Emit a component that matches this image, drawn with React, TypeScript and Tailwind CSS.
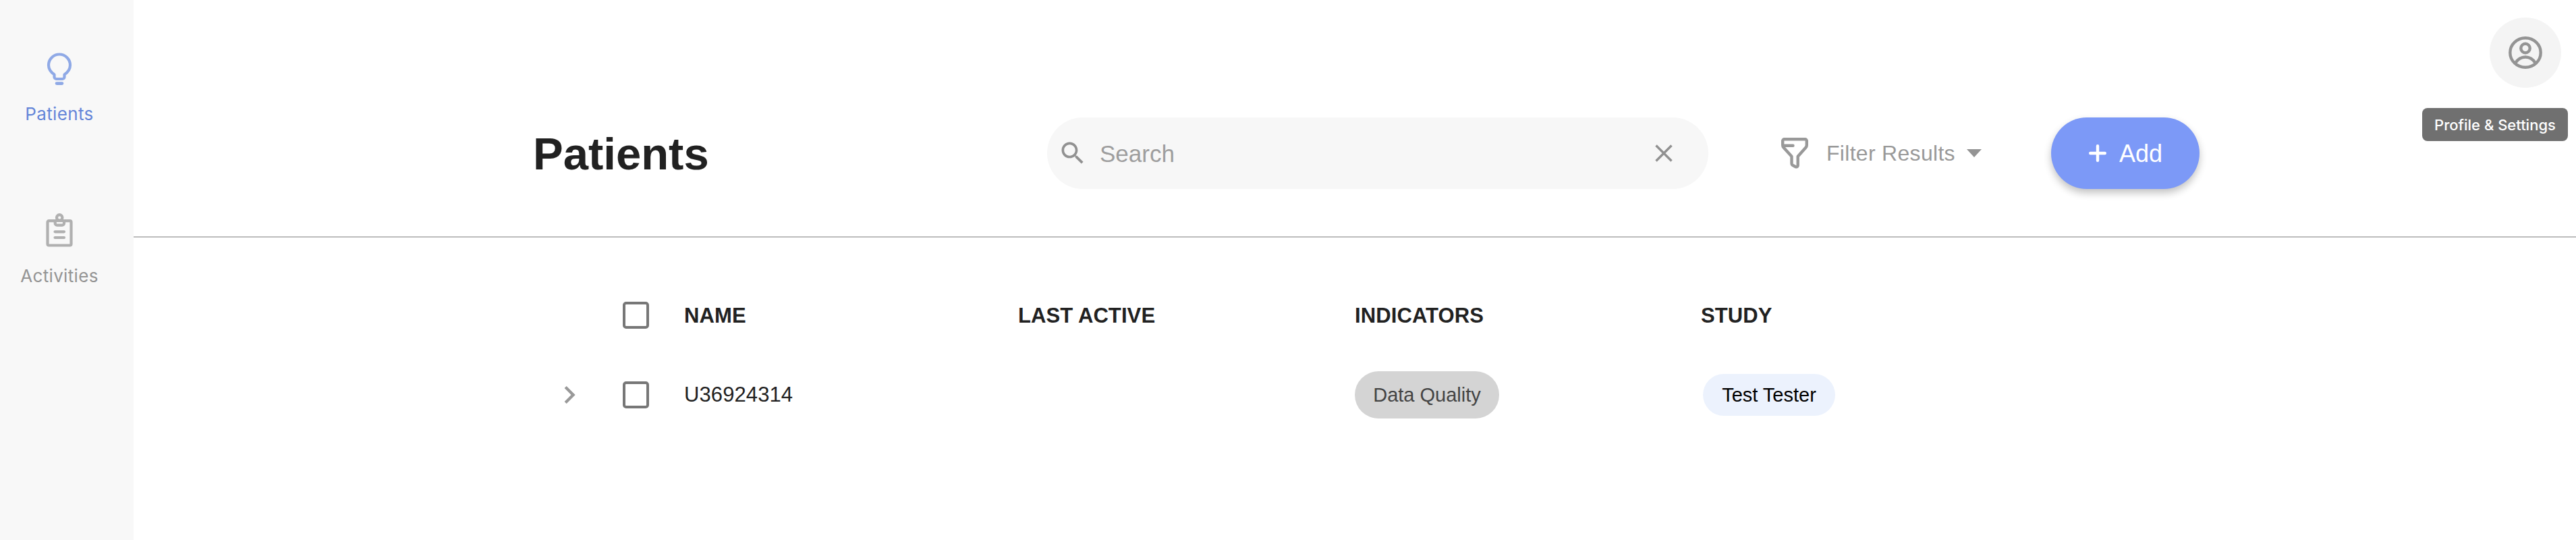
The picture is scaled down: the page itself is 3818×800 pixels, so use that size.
import React from "react";

const BulbIcon = () => (
  <svg className="h-[54px] w-[44px]" viewBox="0 0 44 54" fill="none" stroke="#8fa9e6" strokeWidth="4.200">
    <path d="M14.500 35.500 C8 31 6 26.500 6 21.500 a16 16 0 0 1 32 0 C38 26.500 36 31 29.500 35.500 V39 a3 3 0 0 1 -3 3 H17.500 a3 3 0 0 1 -3 -3 Z" strokeLinejoin="round" />
    <path d="M18 48.600 h8" strokeLinecap="round" strokeWidth="4.600" />
  </svg>
);

const ClipboardIcon = () => (
  <svg className="h-[54px] w-[44px]" viewBox="0 0 44 54" fill="none" stroke="#b0b0b0" strokeWidth="4.200">
    <path d="M15.700 12.200 H6.500 a2 2 0 0 0 -2 2 V46.500 a2 2 0 0 0 2 2 H37.500 a2 2 0 0 0 2 -2 V14.200 a2 2 0 0 0 -2 -2 H29" />
    <path d="M15.700 12 V15.700 a3 3 0 0 0 3 3 H26 a3 3 0 0 0 3 -3 V12 Z" />
    <circle cx="22.200" cy="7.400" r="4.200" />
    <path d="M15.500 28.300 H29 M15.500 37 H29" strokeLinecap="round" />
  </svg>
);

const SearchIcon = () => (
  <svg className="size-[44px]" viewBox="0 0 24 24" fill="#919191">
    <path d="M15.500 14h-.79l-.28-.27C15.410 12.590 16 11.110 16 9.500 16 5.910 13.090 3 9.500 3S3 5.910 3 9.500 5.910 16 9.500 16c1.610 0 3.090-.59 4.230-1.570l.27.28v.79l5 4.990L20.490 19l-4.990-5zm-6 0C7.010 14 5 11.990 5 9.500S7.010 5 9.500 5 14 7.010 14 9.500 11.990 14 9.500 14z" />
  </svg>
);

const FilterIcon = () => (
  <svg className="h-[50px] w-[44px]" viewBox="0 0 44 50" fill="none" stroke="#999999" strokeWidth="4.400" strokeLinejoin="round" strokeLinecap="round">
    <path d="M6.500 4.300 H37.500 a2.300 2.300 0 0 1 2.300 2.300 V13 Q39.800 15 38.500 16.500 L26.700 29.800 V43 Q26.500 46 23.500 45.200 L19 42.800 Q17.500 42 17.500 40.500 V29.800 L5.500 16.500 Q4.200 15 4.200 13 V6.600 a2.300 2.300 0 0 1 2.300 -2.300 Z" />
    <path d="M5 13.700 H19.500" />
  </svg>
);

const ProfileIcon = () => (
  <svg className="size-[52px]" viewBox="0 0 52 52" fill="none" stroke="#949494" strokeWidth="4.400">
    <ellipse cx="26" cy="26" rx="22.700" ry="21.800" />
    <circle cx="26" cy="19.500" r="6.700" />
    <path d="M11 41.500 C14.500 36 20 32.500 26 32.500 S37.500 36 41 41.500" />
  </svg>
);

const Checkbox = () => (
  <span className="block h-[40px] w-[39px] rounded-[5px] border-4 border-[#777777]" />
);

const columns = "grid grid-cols-[122px_91px_495px_499px_513px_400px] items-center";

function NavItem({ icon, label, className }: { icon: React.ReactNode; label: string; className: string }) {
  return (
    <a className="flex w-[176px] flex-col items-center">
      {icon}
      <span className={`mt-[24px] font-[Inter,sans-serif] text-[26px] leading-[32px] tracking-[0.35px] ${className}`}>{label}</span>
    </a>
  );
}

export default function App() {
  return (
    <div className="flex h-[800px] w-full overflow-hidden bg-white font-['Liberation_Sans',Arial,sans-serif] text-[#212121]">
      <aside className="flex w-[198px] shrink-0 flex-col gap-[130px] bg-[#f8f8f8] pt-[75px]">
        <NavItem icon={<BulbIcon />} label="Patients" className="text-[#6485d8]" />
        <NavItem icon={<ClipboardIcon />} label="Activities" className="text-[#949494]" />
      </aside>

      <main className="relative min-w-0 flex-1">
        <header className="flex h-[352px] items-start border-b-2 border-[#bdbdbd] pt-[174px] pl-[592px]">
          <div className="flex h-[106px] items-center">
            <h1 className="w-[762px] pt-[1px] text-[67px] leading-[76px] font-bold">Patients</h1>
            <label className="flex h-[106px] w-[980px] items-center rounded-full bg-[#f7f7f7] pl-[16px]">
              <SearchIcon />
              <span className="ml-[18px] flex-1 pt-[2px] text-[35px] leading-[40px] text-[#9e9e9e]">Search</span>
              <svg className="mr-[49px] size-[34px]" viewBox="0 0 34 34" stroke="#919191" strokeWidth="3.400">
                <path d="M5.500 5.500 L28.500 28.500 M28.500 5.500 L5.500 28.500" />
              </svg>
            </label>
            <button className="ml-[106px] flex w-[402px] items-center">
              <FilterIcon />
              <span className="w-[233px] pl-[25px] text-left text-[32px] leading-[36px] tracking-[0.3px] whitespace-nowrap text-[#999999]">Filter Results</span>
              <svg className="h-[12px] w-[22px]" viewBox="0 0 22 12" fill="#949494">
                <path d="M0 0 H22 L11 12 Z" />
              </svg>
            </button>
            <button className="flex h-[106px] w-[220px] items-center rounded-full bg-[#7c99f7] pl-[56px] text-white shadow-[0_6px_12px_rgba(0,0,0,0.24)]">
              <svg className="size-[26px]" viewBox="0 0 26 26" stroke="#ffffff" strokeWidth="4.400" strokeLinecap="round">
                <path d="M13 2.200 V23.800 M2.200 13 H23.800" />
              </svg>
              <span className="ml-[19px] pt-[2px] text-[36px] leading-[40px]">Add</span>
            </button>
          </div>
        </header>

        <section className="pt-[74px] pl-[603px]">
          <div className={`${columns} h-[82px] text-[31px] leading-[36px] font-bold tracking-[0.1px]`}>
            <span />
            <Checkbox />
            <span className="pt-[2px]">NAME</span>
            <span className="pt-[2px]">LAST ACTIVE</span>
            <span className="pt-[2px]">INDICATORS</span>
            <span className="pt-[2px]">STUDY</span>
          </div>
          <div className={`${columns} mt-[36px] h-[82px] text-[31px] leading-[36px]`}>
            <svg className="ml-[17px] size-[52px]" viewBox="0 0 24 24" fill="#999999">
              <path d="M10 6 8.590 7.410 13.170 12l-4.580 4.590L10 18l6-6z" />
            </svg>
            <Checkbox />
            <span className="tracking-[0.1px]">U36924314</span>
            <span />
            <span className="flex h-[70px] w-[214px] items-center justify-center rounded-full bg-[#d4d4d4] text-[29px] text-[#444444]">
              Data Quality
            </span>
            <span className="ml-[3px] flex h-[62px] w-[196px] items-center justify-center rounded-full bg-[#ecf2fd] text-[29px] text-black">
              Test Tester
            </span>
          </div>
        </section>

        <div className="absolute top-[26px] right-[12px] flex flex-col items-end">
          <button className="mr-[10px] flex h-[104px] w-[106px] items-center justify-center rounded-[50%] bg-[#f4f4f4]">
            <ProfileIcon />
          </button>
          <div className="mt-[30px] flex h-[49px] w-[216px] items-center justify-center rounded-[8px] bg-[#707070] pt-[1px] font-[Inter,sans-serif] text-[22px] font-medium whitespace-nowrap text-white">
            Profile &amp; Settings
          </div>
        </div>
      </main>
    </div>
  );
}
